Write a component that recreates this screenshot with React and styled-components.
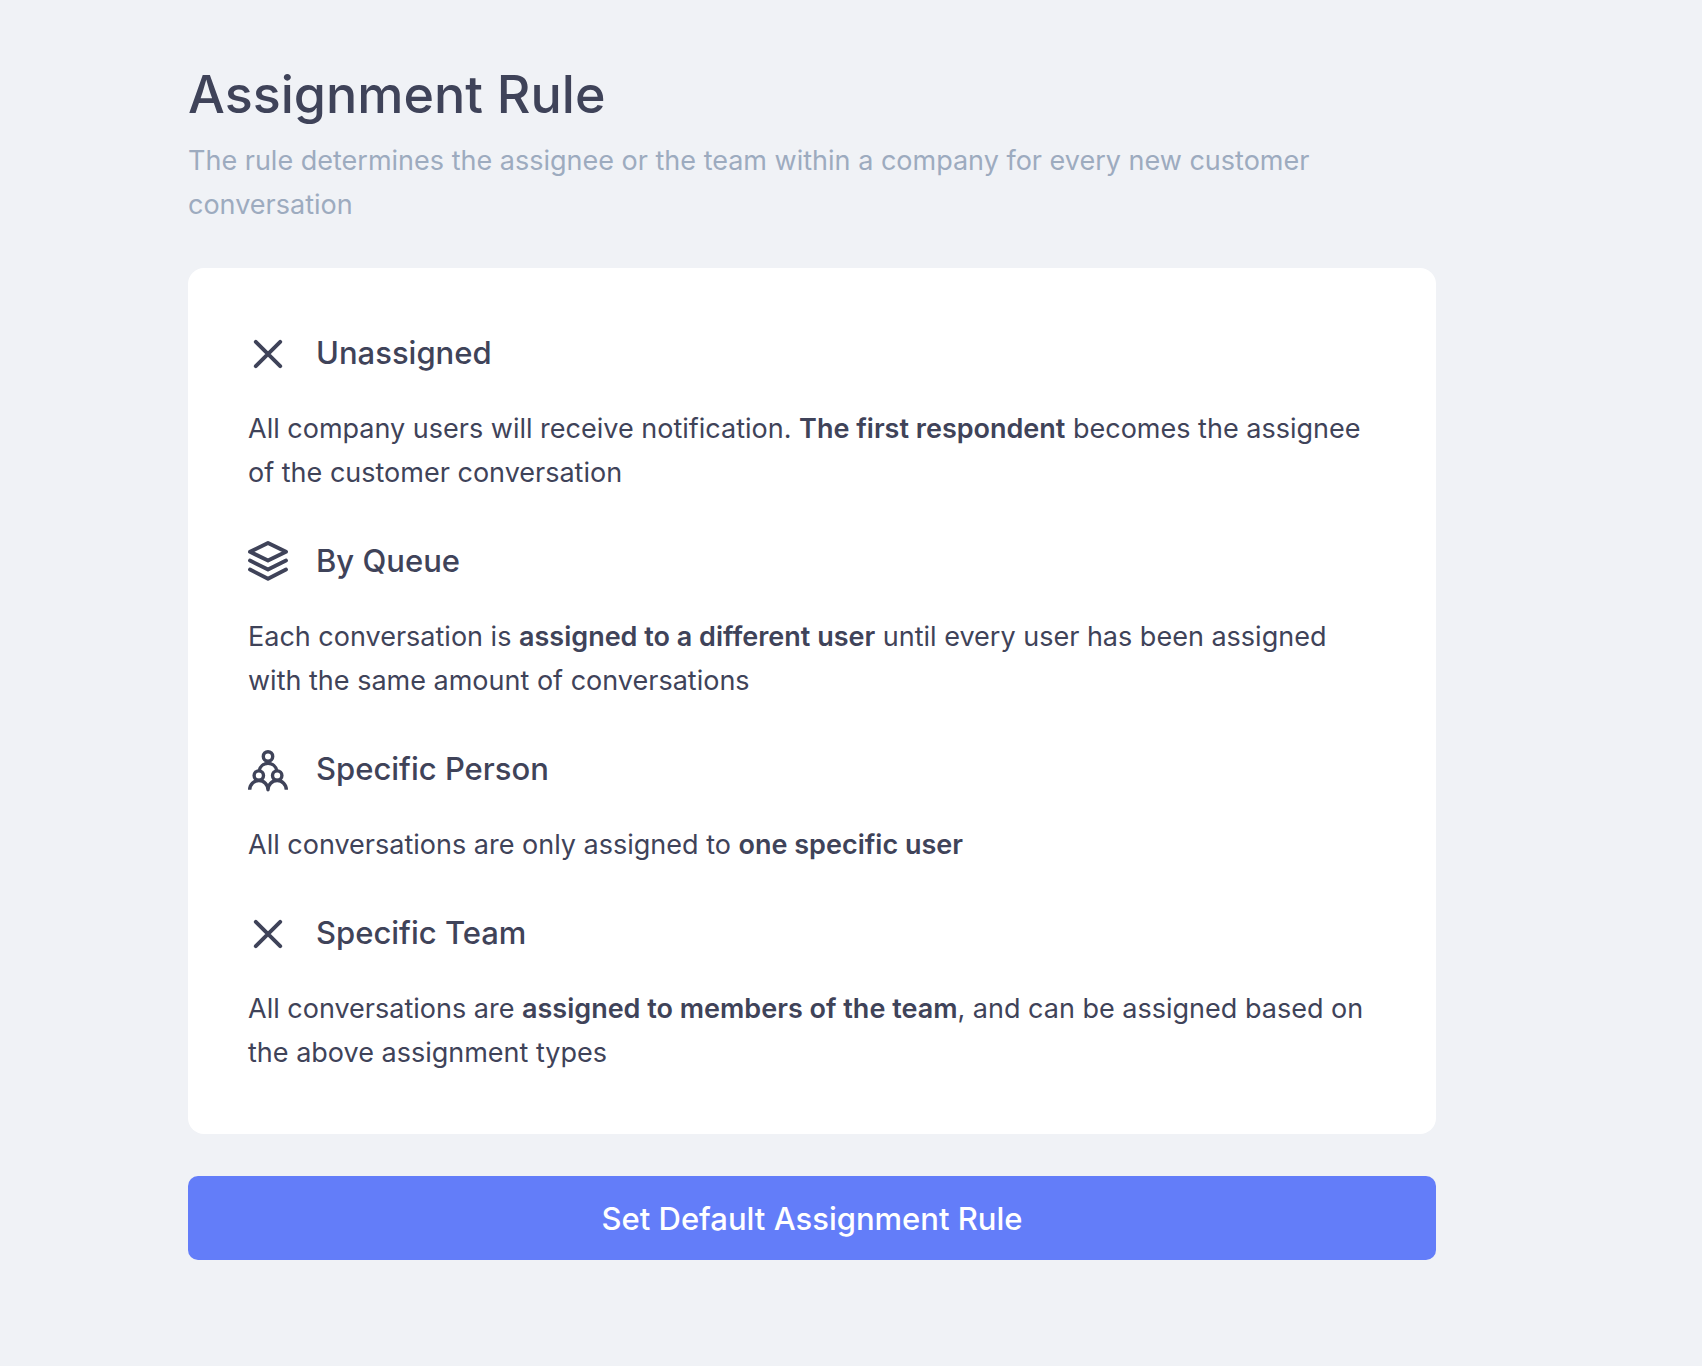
import React from 'react';
import styled, { createGlobalStyle } from 'styled-components';

const GlobalStyle = createGlobalStyle`
  * {
    box-sizing: border-box;
  }
  body {
    margin: 0;
    background: #f0f2f6;
    color: #3f4359;
    font-family: Inter, "Liberation Sans", sans-serif;
  }
`;

const CrossIcon = () => (
  <RuleIcon viewBox="0 0 40 40" aria-hidden="true">
    <path d="M7.8 8.8L32.2 33.2M32.2 8.8L7.8 33.2" />
  </RuleIcon>
);

const LayersIcon = () => (
  <RuleIcon viewBox="0 0 40 40" aria-hidden="true">
    <path d="M20 2L38 10.8L20 19.6L2 10.8Z" />
    <path d="M2 19.6L20 28.6L38 19.6" />
    <path d="M2 28.6L20 37.8L38 28.6" />
  </RuleIcon>
);

const PeopleIcon = () => (
  <RuleIcon viewBox="0 0 40 40" aria-hidden="true" $flat>
    <circle cx="20" cy="7.4" r="4.7" />
    <circle cx="10.8" cy="26.6" r="4.7" />
    <circle cx="29.2" cy="26.6" r="4.7" />
    <path d="M11 22A9.2 9.6 0 0 1 29 22" />
    <path d="M1.7 40.8A9.15 9.3 0 0 1 20 40.8A9.15 9.3 0 0 1 38.3 40.8" />
  </RuleIcon>
);

const rules = [
  {
    title: 'Unassigned',
    icon: <CrossIcon />,
    text: (
      <>
        All company users will receive notification. <strong>The first respondent</strong> becomes
        the assignee of the customer conversation
      </>
    ),
  },
  {
    title: 'By Queue',
    icon: <LayersIcon />,
    text: (
      <>
        Each conversation is <strong>assigned to a different user</strong> until every user has
        been assigned with the same amount of conversations
      </>
    ),
  },
  {
    title: 'Specific Person',
    icon: <PeopleIcon />,
    text: (
      <>
        All conversations are only assigned to <strong>one specific user</strong>
      </>
    ),
  },
  {
    title: 'Specific Team',
    icon: <CrossIcon />,
    text: (
      <>
        All conversations are <strong>assigned to members of the team</strong>, and can be
        assigned based on the above assignment types
      </>
    ),
  },
];

export default function App() {
  return (
    <Page>
      <GlobalStyle />
      <Title>Assignment Rule</Title>
      <Subtitle>
        The rule determines the assignee or the team within a company for every new customer
        conversation
      </Subtitle>
      <Card>
        {rules.map((rule) => (
          <section key={rule.title}>
            <RuleHeader>
              {rule.icon}
              <RuleTitle>{rule.title}</RuleTitle>
            </RuleHeader>
            <RuleText>{rule.text}</RuleText>
          </section>
        ))}
      </Card>
      <SubmitButton type="button">Set Default Assignment Rule</SubmitButton>
    </Page>
  );
}

const Page = styled.main`
  padding: 61px 266px 60px 188px;
`;

const Title = styled.h1`
  margin: 0 0 10px;
  font-size: 52px;
  font-weight: 500;
  line-height: 68px;
`;

const Subtitle = styled.p`
  margin: 0 0 41px;
  color: #9dabbf;
  font-size: 27px;
  line-height: 44px;
`;

const Card = styled.div`
  display: flex;
  flex-direction: column;
  gap: 41px;
  padding: 60px 60px 59px;
  background: #fff;
  border-radius: 16px;
`;

const RuleHeader = styled.div`
  display: flex;
  align-items: center;
  gap: 28px;
  height: 50px;
  margin-bottom: 29px;
`;

const RuleIcon = styled.svg`
  flex: none;
  width: 40px;
  height: 40px;
  overflow: visible;
  fill: none;
  stroke: currentColor;
  stroke-width: ${(props) => (props.$flat ? 3.4 : 3.9)};
  stroke-linecap: ${(props) => (props.$flat ? 'butt' : 'round')};
  stroke-linejoin: round;
`;

const RuleTitle = styled.h2`
  margin: 0;
  font-size: 31px;
  font-weight: 500;
  line-height: 50px;
`;

const RuleText = styled.p`
  margin: 0;
  font-size: 27px;
  line-height: 44px;

  strong {
    font-weight: 600;
  }
`;

const SubmitButton = styled.button`
  display: block;
  width: 100%;
  height: 84px;
  margin-top: 42px;
  border: 0;
  border-radius: 10px;
  background: #637df9;
  color: #fff;
  font: 500 31px Inter, "Liberation Sans", sans-serif;
  cursor: pointer;
`;
